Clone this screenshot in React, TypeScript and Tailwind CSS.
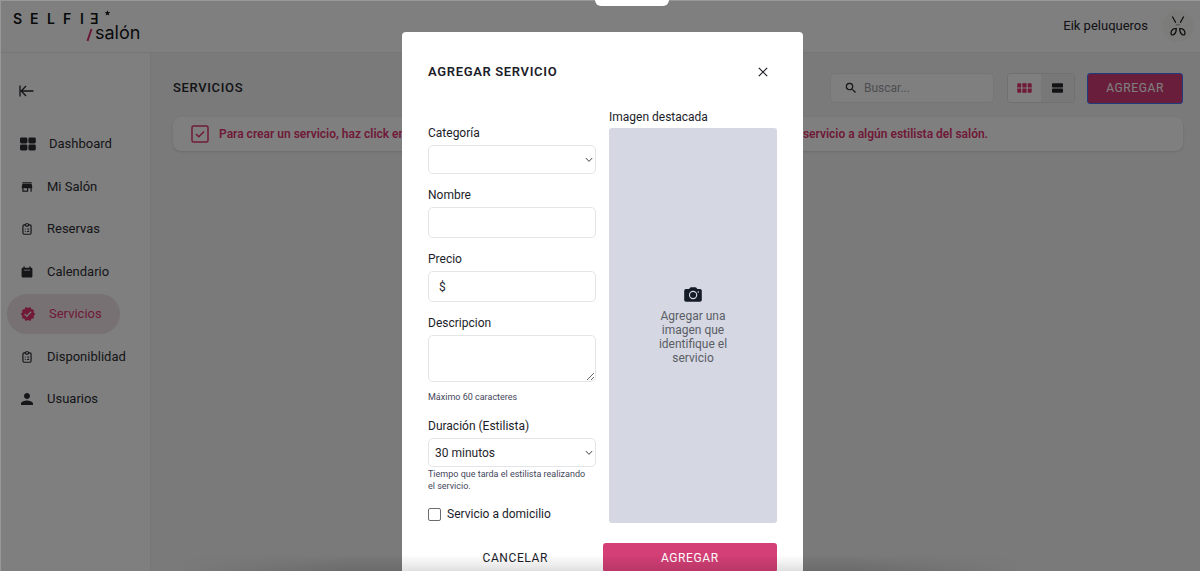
import { MdStore, MdVerified, MdPerson, MdSearch } from "react-icons/md";
import { TbClipboardList } from "react-icons/tb";
import type { ReactNode } from "react";

function DashboardIcon() {
  return (
    <svg viewBox="0 0 16 14" className="h-[14px] w-4" fill="currentColor" aria-hidden="true">
      <rect x="0" y="0.5" width="7.4" height="6" rx="1.4" />
      <rect x="8.4" y="0.5" width="7.4" height="6" rx="1.4" />
      <rect x="0" y="7.5" width="7.4" height="6" rx="1.4" />
      <rect x="8.4" y="7.5" width="7.4" height="6" rx="1.4" />
    </svg>
  );
}

function CalendarIcon() {
  return (
    <svg viewBox="0 0 12 12" className="size-3" fill="currentColor" aria-hidden="true">
      <path
        fillRule="evenodd"
        d="M2.4 0.6h1.4v1.1h4.4V0.6h1.4v1.1h0.6a1.2 1.2 0 0 1 1.2 1.2v7.3a1.2 1.2 0 0 1-1.2 1.2H1.8a1.2 1.2 0 0 1-1.2-1.2V2.9a1.2 1.2 0 0 1 1.2-1.2h0.6zM2.8 3.8v0.8h6.4v-0.8z"
      />
    </svg>
  );
}

function CloseIcon() {
  return (
    <svg viewBox="0 0 10 10" className="size-[10px]" fill="none" stroke="currentColor" strokeWidth="1.2" aria-hidden="true">
      <path d="M0.8 0.8l8.4 8.4M9.2 0.8L0.8 9.2" />
    </svg>
  );
}

function CameraIcon() {
  return (
    <svg viewBox="0 0 18 15" className="h-[15px] w-[18px]" aria-hidden="true">
      <path
        d="M5.6 1.2Q6.2 0.2 7.2 0.2h4q1 0 1.6 1l0.4 0.7h2.8q1.8 0 1.8 1.8v9.2q0 1.8-1.8 1.8H2q-1.8 0-1.8-1.8V3.7Q0.2 1.9 2 1.9h3.2z"
        fill="#161b28"
      />
      <circle cx="9.1" cy="8" r="3.6" fill="none" stroke="#d5d8e2" strokeWidth="1.1" />
      <circle cx="14.3" cy="5" r="0.8" fill="#d5d8e2" />
    </svg>
  );
}

function Logo() {
  return (
    <svg viewBox="0 0 132 36" className="h-9 w-[132px]" role="img" aria-label="Selfie salón">
      <g fill="#141418" fontFamily="Inter, 'Liberation Sans', sans-serif">
        <g fontSize="14" fontWeight="600">
          <text x="0" y="16">S</text>
          <text x="17" y="16">E</text>
          <text x="34" y="16">L</text>
          <text x="50" y="16">F</text>
          <text x="67" y="16">I</text>
          <text x="77" y="16">Ǝ</text>
        </g>
        <text x="82" y="31" fontSize="18">salón</text>
      </g>
      <path d="M94.500 2.200l0.700 1.900 2.100 0.100-1.600 1.300 0.500 2-1.700-1.100-1.700 1.100 0.500-2-1.600-1.300 2.100-0.100z" fill="#141418" />
      <path d="M74.500 33l4-12" stroke="#d6336c" strokeWidth="2" />
    </svg>
  );
}

function Avatar() {
  return (
    <span className="flex size-8 items-center justify-center rounded-full bg-[#f8f8f5]">
      <svg viewBox="0 0 20 24" className="h-6 w-5" fill="none" stroke="#15151a" aria-hidden="true">
        <path d="M4.300 2.500L7.800 8.800M15.700 2.500L12.200 8.800" strokeWidth="1.200" />
        <path d="M8 10.800h4" strokeWidth="0.400" />
        <path
          d="M8.300 14.500C5 14.300 3 16.600 3 19c0 2 1.500 2.500 2.900 1.500 1.700-1.200 2.400-3.500 2.400-6zM11.700 14.500c3.300-0.200 5.300 2.100 5.300 4.500 0 2-1.500 2.500-2.900 1.500-1.700-1.200-2.400-3.500-2.400-6z"
          strokeWidth="1.200"
        />
      </svg>
    </span>
  );
}

function NavItem({ icon, label, active = false, wide = false }: { icon: ReactNode; label: string; active?: boolean; wide?: boolean }) {
  return (
    <a
      href="#"
      aria-current={active ? "page" : undefined}
      className={
        "flex h-10 w-fit items-center rounded-full pl-[13px] text-[13px] " +
        (active ? "bg-[#f0e2e7] pr-[18px] text-[#e03470] " : "pr-[13px] text-[#2c2c32] ") +
        (wide ? "gap-[13px]" : "gap-[13px]")
      }
    >
      <span className={wide ? "flex w-4 justify-center" : "flex w-[14px] justify-center"}>{icon}</span>
      {label}
    </a>
  );
}

const fieldClass = "block w-full rounded-[5px] border border-[#e4e5e9] bg-white text-[#26262c] outline-none";

function Field({ id, label, children }: { id: string; label: string; children: ReactNode }) {
  return (
    <div className="flex flex-col">
      <label htmlFor={id} className="mb-1 text-xs leading-4">{label}</label>
      {children}
    </div>
  );
}

function SelectBox({ id, options }: { id: string; options: string[] }) {
  return (
    <div className="relative">
      <select id={id} className={fieldClass + " h-[29px] appearance-none pr-5 pl-1.5 text-xs"}>
        {options.map((o) => (
          <option key={o}>{o}</option>
        ))}
      </select>
      <svg viewBox="0 0 8 6" className="pointer-events-none absolute top-3 right-[3px] h-1.5 w-2" fill="none" stroke="#44444a" strokeWidth="1" aria-hidden="true">
        <path d="M0.800 1l3.200 3.400L7.200 1" />
      </svg>
    </div>
  );
}

function ServiceDialog() {
  return (
    <div
      role="dialog"
      aria-modal="true"
      aria-labelledby="dialog-title"
      className="mx-auto mt-[31px] w-full max-w-[401px] rounded-[4px] bg-white px-[26px] pt-[30px] pb-7 text-[#1b1d29]"
    >
      <div className="flex h-5 items-center justify-between">
        <h2 id="dialog-title" className="text-[13px] font-semibold tracking-wider">AGREGAR SERVICIO</h2>
        <button type="button" aria-label="Cerrar" className="mr-[9px]">
          <CloseIcon />
        </button>
      </div>
      <form>
        <div className="mt-[27px] grid grid-cols-2 gap-[13px]">
          <div className="flex flex-col gap-[13px] pt-4">
            <Field id="categoria" label="Categoría">
              <SelectBox id="categoria" options={[""]} />
            </Field>
            <Field id="nombre" label="Nombre">
              <input id="nombre" type="text" className={fieldClass + " h-[31px] px-2 text-xs"} />
            </Field>
            <Field id="precio" label="Precio">
              <div className={fieldClass + " flex h-[31px] items-center pl-[10px] text-xs"}>
                <span>$</span>
                <input id="precio" type="text" className="min-w-0 flex-1 px-2 outline-none" />
              </div>
            </Field>
            <Field id="descripcion" label="Descripcion">
              <textarea id="descripcion" className={fieldClass + " h-[47px] resize-y px-2 text-xs"} />
              <p className="mt-[9px] pb-0.5 text-[9px] leading-3 text-[#44475a]">Máximo 60 caracteres</p>
            </Field>
            <Field id="duracion" label="Duración (Estilista)">
              <SelectBox id="duracion" options={["30 minutos"]} />
              <p className="mt-px pr-2 text-[9px] leading-3 text-[#44475a]">Tiempo que tarda el estilista realizando el servicio.</p>
            </Field>
            <label className="flex h-[18px] items-center gap-1.5 text-xs">
              <input type="checkbox" className="size-[13px] appearance-none rounded-[2px] border border-[#6b6b70] bg-white" />
              Servicio a domicilio
            </label>
          </div>
          <div className="flex flex-col">
            <label htmlFor="imagen" className="mb-[3px] text-xs leading-4">Imagen destacada</label>
            <button id="imagen" type="button" className="flex flex-1 flex-col items-center justify-center rounded-[3px] bg-[#d5d8e2] px-12 text-xs leading-[14px] text-[#5b5d66]">
              <CameraIcon />
              <span className="mt-[7px]">Agregar una imagen que identifique el servicio</span>
            </button>
          </div>
        </div>
        <div className="mt-5 flex">
          <button type="button" className="h-[29px] flex-1 text-xs tracking-wider">CANCELAR</button>
          <button type="submit" className="h-[29px] flex-1 rounded-[3px] bg-[#d33f76] text-xs tracking-wider text-white">AGREGAR</button>
        </div>
      </form>
    </div>
  );
}

export default function App() {
  return (
    <div className="relative flex h-screen flex-col overflow-hidden bg-[#f4f4f7] font-['Roboto',sans-serif] text-[#26262c]">
      <header className="flex h-[53px] shrink-0 items-center justify-between border-b border-[#ececef] bg-white pr-[6px] pl-[13px]">
        <Logo />
        <div className="flex items-center gap-[14px] text-[13px]">
          Eik peluqueros
          <Avatar />
        </div>
      </header>
      <div className="flex min-h-0 flex-1">
        <aside className="w-[151px] shrink-0 border-r border-[#ececef] bg-white">
          <button type="button" aria-label="Contraer menú" className="mt-[31px] ml-[19px] block">
            <svg viewBox="0 0 15 14" className="h-[14px] w-[15px]" fill="none" stroke="#26262c" strokeWidth="1.300" aria-hidden="true">
              <path d="M1 1.500v11M14.500 7H2.500M7 2L2.200 7 7 12" />
            </svg>
          </button>
          <nav className="mt-[26px] ml-[7px] flex h-[295px] flex-col justify-between">
            <NavItem icon={<DashboardIcon />} label="Dashboard" wide />
            <NavItem icon={<MdStore className="size-[14px]" />} label="Mi Salón" />
            <NavItem icon={<TbClipboardList className="size-[14px]" />} label="Reservas" />
            <NavItem icon={<CalendarIcon />} label="Calendario" />
            <NavItem icon={<MdVerified className="size-4" />} label="Servicios" active wide />
            <NavItem icon={<TbClipboardList className="size-[14px]" />} label="Disponiblidad" />
            <NavItem icon={<MdPerson className="size-[18px] shrink-0" />} label="Usuarios" />
          </nav>
        </aside>
        <main className="min-w-0 flex-1 pt-5 pr-[17px] pl-[22px]">
          <div className="flex h-[30px] items-center">
            <h1 className="flex-1 text-[13px] font-medium tracking-wider">SERVICIOS</h1>
            <label className="flex h-[30px] w-[164px] items-center gap-1.5 rounded-[4px] border border-[#ececf0] bg-white pl-[13px]">
              <MdSearch className="size-[14px]" />
              <input type="search" aria-label="Buscar" placeholder="Buscar..." className="min-w-0 flex-1 text-xs outline-none placeholder:text-[#9c9ca4]" />
            </label>
            <div className="ml-[13px] flex h-[30px] w-[68px] overflow-hidden rounded-[4px] border border-[#e0e0e6]">
              <button type="button" aria-label="Vista de cuadrícula" className="flex flex-1 items-center justify-center bg-white text-[#e03470]">
                <svg viewBox="0 0 15 10" className="h-[10px] w-[15px]" fill="currentColor" aria-hidden="true">
                  <path d="M1.200 0.300h3v4.200H0.200V1.300q0-1 1-1zM5.300 0.300h4.300v4.200H5.300zM10.700 0.300h3q1 0 1 1v3.200h-4zM0.200 5.500h4v4.200H1.200q-1 0-1-1zM5.300 5.500h4.300v4.200H5.300zM10.700 5.500h4v3.200q0 1-1 1h-3z" />
                </svg>
              </button>
              <button type="button" aria-label="Vista de lista" className="flex flex-1 items-center justify-center bg-[#f0f0f3]">
                <svg viewBox="0 0 11 10" className="h-[10px] w-[11px]" fill="currentColor" aria-hidden="true">
                  <rect y="0.300" width="11" height="4.200" rx="0.800" />
                  <rect y="5.500" width="11" height="4.200" rx="0.800" />
                </svg>
              </button>
            </div>
            <button type="button" className="ml-3 h-[31px] w-24 rounded-[3px] border border-[#3f78ff] bg-[#d33f76] text-xs tracking-wider text-white">AGREGAR</button>
          </div>
          <div className="mt-[14px] flex h-[34px] items-center gap-[10px] rounded-[8px] bg-white pl-[18px] text-xs font-semibold whitespace-nowrap text-[#e03470] shadow">
            <svg viewBox="0 0 18 18" className="size-[18px]" fill="none" stroke="currentColor" strokeWidth="1.500" aria-hidden="true">
              <rect x="1" y="1" width="16" height="16" rx="1.500" />
              <path d="M5 9l2.800 2.800L13 6.500" />
            </svg>
            Para crear un servicio, haz click en el botón de "Agregar", completa todos los datos y luego podrás asignar el servicio a algún estilista del salón.
          </div>
        </main>
      </div>
      <div className="absolute inset-0 overflow-hidden border-t border-l border-white/20 bg-black/50 pl-1">
        <ServiceDialog />
      </div>
      <div className="absolute top-0 left-1/2 h-[6px] w-[74px] -translate-x-[5px] rounded-b-[10px] bg-white shadow-lg" />
      <div className="pointer-events-none absolute inset-x-[180px] bottom-0 h-4 bg-linear-to-t from-black/12 to-transparent [mask-image:linear-gradient(to_right,transparent,black_20%,black_80%,transparent)]" />
    </div>
  );
}
